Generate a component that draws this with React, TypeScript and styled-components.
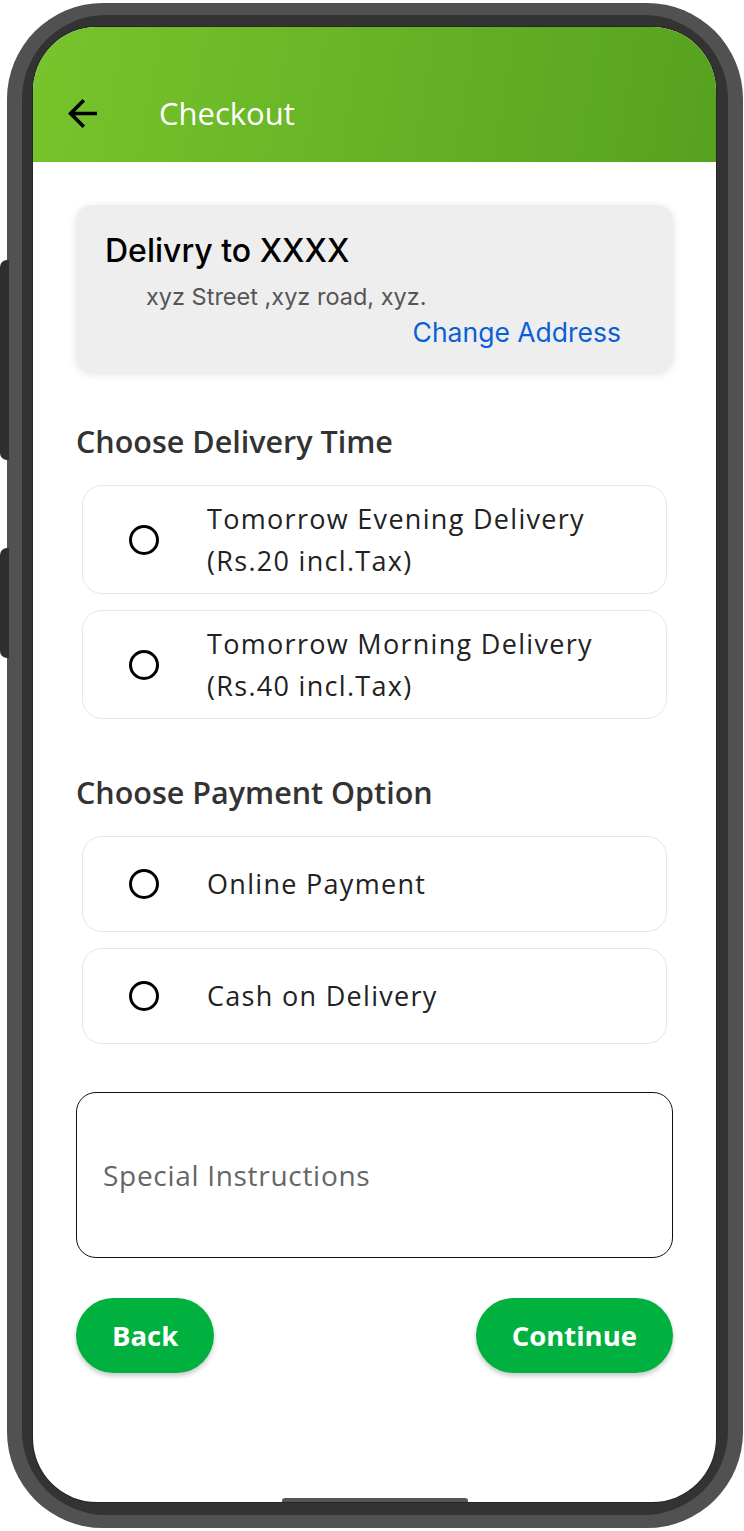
import React from 'react';
import styled, { createGlobalStyle } from 'styled-components';

const GlobalStyle = createGlobalStyle`
    html, body {
        margin: 0;
        padding: 0;
        background: #ffffff;
    }
    body {
        font-family: 'Open Sans', 'Noto Sans', sans-serif;
    }
`;

const deliveryOptions = [
    { id: 'evening', lines: ['Tomorrow Evening Delivery', '(Rs.20 incl.Tax)'] },
    { id: 'morning', lines: ['Tomorrow Morning Delivery', '(Rs.40 incl.Tax)'] },
];

const paymentOptions = [
    { id: 'online', lines: ['Online Payment'] },
    { id: 'cod', lines: ['Cash on Delivery'] },
];

const BackArrow = () => (
    <svg width='29' height='29' viewBox='4 4 16 16' fill='#000'>
        <path d='M20 11H7.83l5.59-5.59L12 4l-8 8 8 8 1.41-1.41L7.83 13H20v-2z' />
    </svg>
);

const Checkout = () => {
    return (
        <Page>
            <GlobalStyle />
            <Phone>
                <SideKey $top={257} $height={200} />
                <SideKey $top={545} $height={110} />
                <Bezel>
                    <Screen>
                        <Header>
                            <IconButton aria-label='back'>
                                <BackArrow />
                            </IconButton>
                            <Title>Checkout</Title>
                        </Header>
                        <Content>
                            <AddressCard>
                                <AddressTitle>Delivry to XXXX</AddressTitle>
                                <AddressLine>xyz Street ,xyz road, xyz.</AddressLine>
                                <ChangeLink>Change Address</ChangeLink>
                            </AddressCard>

                            <SectionTitle $gap={49}>Choose Delivery Time</SectionTitle>
                            <OptionList>
                                {deliveryOptions.map((o) => (
                                    <Option key={o.id} $height={109}>
                                        <Radio />
                                        <OptionText>
                                            {o.lines.map((l) => (
                                                <span key={l}>{l}</span>
                                            ))}
                                        </OptionText>
                                    </Option>
                                ))}
                            </OptionList>

                            <SectionTitle $gap={53}>Choose Payment Option</SectionTitle>
                            <OptionList>
                                {paymentOptions.map((o) => (
                                    <Option key={o.id} $height={96}>
                                        <Radio />
                                        <OptionText>
                                            {o.lines.map((l) => (
                                                <span key={l}>{l}</span>
                                            ))}
                                        </OptionText>
                                    </Option>
                                ))}
                            </OptionList>

                            <Instructions placeholder='Special Instructions' />

                            <Actions>
                                <PillButton>Back</PillButton>
                                <PillButton>Continue</PillButton>
                            </Actions>
                        </Content>
                        <HomeBar />
                    </Screen>
                </Bezel>
            </Phone>
        </Page>
    );
};

const Page = styled.div`
    width: 744px;
    height: 1531px;
    padding: 3px 0 0 7px;
    box-sizing: border-box;
    overflow: hidden;
`;

const Phone = styled.div`
    position: relative;
    width: 736px;
    height: 1525px;
    box-sizing: border-box;
    padding: 12px 15px 13px 15px;
    border-radius: 96px;
    background: #515151;
`;

const SideKey = styled.div<{ $top: number; $height: number }>`
    position: absolute;
    left: -7px;
    top: ${(p) => p.$top}px;
    width: 9px;
    height: ${(p) => p.$height}px;
    border-radius: 7px 0 0 7px;
    background: #2e2e2e;
`;

const Bezel = styled.div`
    height: 100%;
    box-sizing: border-box;
    padding: 12px 12px 13px 11px;
    border-radius: 84px;
    background: #333333;
`;

const Screen = styled.div`
    position: relative;
    height: 100%;
    overflow: hidden;
    border-radius: 64px;
    background: #ffffff;
    box-shadow: 0 0 0 1px #262626;
`;

const Header = styled.header`
    height: 135px;
    box-sizing: border-box;
    display: flex;
    align-items: center;
    padding: 37px 0 0 35px;
    background: linear-gradient(100deg, #78c42c 0%, #66b326 50%, #56a21f 100%);
`;

const IconButton = styled.button`
    display: flex;
    align-items: center;
    justify-content: center;
    width: 29px;
    height: 29px;
    padding: 0;
    border: none;
    background: none;
`;

const Title = styled.h1`
    margin: 0 0 0 62px;
    font-family: 'Open Sans', sans-serif;
    font-size: 31px;
    font-weight: 500;
    color: #ffffff;
`;

const Content = styled.main`
    padding: 43px 43px 0 43px;
    display: flex;
    flex-direction: column;
`;

const AddressCard = styled.section`
    display: flex;
    flex-direction: column;
    height: 167px;
    box-sizing: border-box;
    padding: 27px 52px 0 29px;
    border-radius: 16px;
    background: #eeeeee;
    box-shadow: 0 2px 8px rgba(0, 0, 0, 0.12);
`;

const AddressTitle = styled.h2`
    margin: 0;
    font-family: 'Inter', sans-serif;
    font-size: 32px;
    line-height: 38px;
    font-weight: 500;
    color: #000000;
`;

const AddressLine = styled.p`
    margin: 12px 0 0 41px;
    font-family: 'Inter', sans-serif;
    font-size: 23.5px;
    line-height: 30px;
    color: #555555;
`;

const ChangeLink = styled.a`
    align-self: flex-end;
    margin-top: 4px;
    font-family: 'Inter', sans-serif;
    font-size: 26.5px;
    line-height: 32px;
    color: #0b5fd6;
    cursor: pointer;
`;

const SectionTitle = styled.h3<{ $gap: number }>`
    margin: ${(p) => p.$gap}px 0 24px 0;
    font-family: 'Open Sans', sans-serif;
    font-size: 30.5px;
    line-height: 40px;
    font-weight: 600;
    color: #333333;
`;

const OptionList = styled.div`
    display: flex;
    flex-direction: column;
    gap: 16px;
    margin: 0 6px;
`;

const Option = styled.label<{ $height: number }>`
    display: flex;
    align-items: center;
    height: ${(p) => p.$height}px;
    box-sizing: border-box;
    padding-left: 46px;
    border: 1.5px solid #e6e6e6;
    border-radius: 20px;
    background: #ffffff;
`;

const Radio = styled.span`
    flex: none;
    width: 30px;
    height: 30px;
    box-sizing: border-box;
    border: 3px solid #000000;
    border-radius: 50%;
`;

const OptionText = styled.span`
    display: flex;
    flex-direction: column;
    margin-left: 48px;
    font-family: 'Open Sans', sans-serif;
    font-size: 27px;
    line-height: 42px;
    letter-spacing: 1.3px;
    color: #222222;
`;

const Instructions = styled.input`
    margin-top: 48px;
    height: 166px;
    box-sizing: border-box;
    padding: 0 26px;
    border: 1.5px solid #111111;
    border-radius: 20px;
    font-family: 'Open Sans', sans-serif;
    font-size: 28px;
    letter-spacing: 0.7px;
    color: #222222;
    outline: none;
    &::placeholder {
        color: #666666;
    }
`;

const Actions = styled.div`
    display: flex;
    justify-content: space-between;
    margin-top: 40px;
`;

const PillButton = styled.button`
    height: 75px;
    padding: 0 36px;
    border: none;
    border-radius: 38px;
    background: #00b140;
    box-shadow: 0 3px 5px rgba(0, 0, 0, 0.22);
    font-family: 'Open Sans', sans-serif;
    font-size: 27.5px;
    font-weight: 700;
    color: #ffffff;
`;

const HomeBar = styled.div`
    position: absolute;
    left: 50%;
    bottom: 0;
    width: 186px;
    height: 4px;
    transform: translateX(-50%);
    border-radius: 3px 3px 0 0;
    background: #555555;
`;

export default Checkout;
